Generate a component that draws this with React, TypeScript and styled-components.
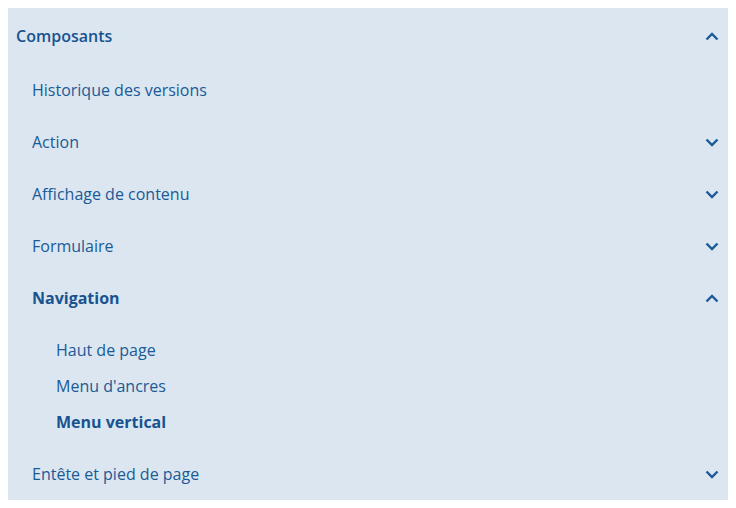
import React from "react";
import styled, { createGlobalStyle } from "styled-components";

const Global = createGlobalStyle`
  body {
    margin: 8px;
    background: #ffffff;
    font-family: "Open Sans", "Noto Sans", sans-serif;
  }
`;

const Panel = styled.nav`
  width: 720px;
  background: #dbe6f0;
  color: #1a5a97;
`;

const List = styled.ul`
  list-style: none;
  margin: 0;
  padding: 0;
`;

const SubList = styled.ul`
  list-style: none;
  margin: 0;
  padding: 8px 0;
`;

const Row = styled.div<{ $indent: number; $height: number; $weight: number; $dark?: boolean }>`
  display: flex;
  align-items: center;
  justify-content: space-between;
  height: ${(p) => p.$height}px;
  padding-left: ${(p) => p.$indent}px;
  padding-right: 9px;
  font-size: 16px;
  line-height: 24px;
  font-weight: ${(p) => p.$weight};
  color: ${(p) => (p.$dark ? "#18538f" : "#1a5a97")};
  cursor: pointer;
`;

const Chevron = styled.svg`
  width: 14px;
  height: 9px;
  flex: none;
`;

const Icon = ({ up }: { up?: boolean }) => (
  <Chevron viewBox="0 0 14 9">
    <polyline
      points={up ? "1.5,7.5 7,2 12.5,7.5" : "1.5,1.5 7,7 12.5,1.5"}
      fill="none"
      stroke="#1a5a97"
      strokeWidth="2.4"
    />
  </Chevron>
);

export default function App() {
  return (
    <>
      <Global />
      <Panel>
        <List>
          <li>
            <Row $indent={8} $height={56} $weight={600} $dark>
              <span>Composants</span>
              <Icon up />
            </Row>
            <List>
              <li>
                <Row $indent={24} $height={52} $weight={400}>
                  <span>Historique des versions</span>
                </Row>
              </li>
              <li>
                <Row $indent={24} $height={52} $weight={400}>
                  <span>Action</span>
                  <Icon />
                </Row>
              </li>
              <li>
                <Row $indent={24} $height={52} $weight={400}>
                  <span>Affichage de contenu</span>
                  <Icon />
                </Row>
              </li>
              <li>
                <Row $indent={24} $height={52} $weight={400}>
                  <span>Formulaire</span>
                  <Icon />
                </Row>
              </li>
              <li>
                <Row $indent={24} $height={52} $weight={700} $dark>
                  <span>Navigation</span>
                  <Icon up />
                </Row>
                <SubList>
                  <li>
                    <Row $indent={48} $height={36} $weight={400}>
                      <span>Haut de page</span>
                    </Row>
                  </li>
                  <li>
                    <Row $indent={48} $height={36} $weight={400}>
                      <span>Menu d'ancres</span>
                    </Row>
                  </li>
                  <li>
                    <Row $indent={48} $height={36} $weight={700} $dark>
                      <span>Menu vertical</span>
                    </Row>
                  </li>
                </SubList>
              </li>
              <li>
                <Row $indent={24} $height={52} $weight={400}>
                  <span>Entête et pied de page</span>
                  <Icon />
                </Row>
              </li>
            </List>
          </li>
        </List>
      </Panel>
    </>
  );
}
